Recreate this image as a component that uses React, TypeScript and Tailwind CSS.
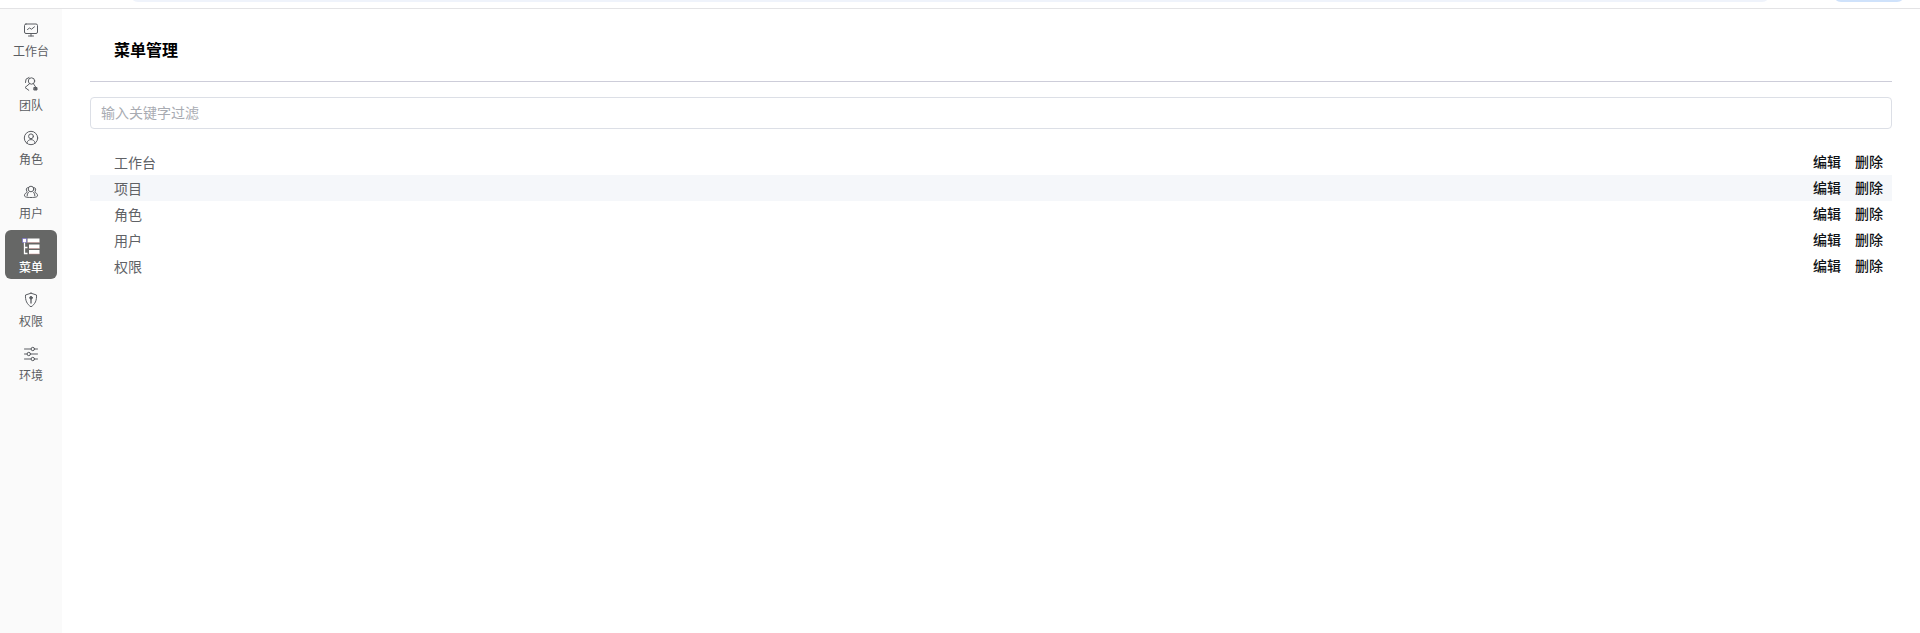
import React from "react";

const ic = { fill: "none", stroke: "currentColor", strokeWidth: 1, strokeLinecap: "round" as const, strokeLinejoin: "round" as const };

const Workbench = () => (
  <svg width="16" height="16" viewBox="0 0 16 16" {...ic}>
    <rect x="1.500" y="2" width="13" height="9.500" rx="1.500" />
    <path d="M4.500 7.500 6.500 6l2 1.200 3-2.400M8 11.500V14M5.500 14h5" />
  </svg>
);
const Team = () => (
  <svg width="16" height="16" viewBox="0 0 16 16" {...ic}>
    <circle cx="8.500" cy="5" r="3.200" />
    <path d="M6.500 7.800 2 11.500l3.800 2.800M10.500 7.800l2 3" />
    <path d="M6 1.500 3 3.200 2.500 6.500" />
    <rect x="11.200" y="11.500" width="2.800" height="2.500" fill="currentColor" />
  </svg>
);
const Role = () => (
  <svg width="16" height="16" viewBox="0 0 16 16" {...ic}>
    <circle cx="8" cy="8" r="6.700" />
    <circle cx="8" cy="6.300" r="2.400" />
    <path d="M3.800 13c.6-2.200 2.200-3.400 4.200-3.400s3.600 1.200 4.200 3.400" />
  </svg>
);
const User = () => (
  <svg width="16" height="16" viewBox="0 0 16 16" {...ic}>
    <circle cx="8" cy="5" r="2.800" />
    <path d="M5.300 3.500C3.800 3.500 3 4.600 3.400 6c.2 1 .8 1.500.8 2.300-1.300.6-3 1.600-2.700 3.600.2 1 2 1.600 6.500 1.600s6.300-.6 6.500-1.600c.3-2-1.400-3-2.700-3.600 0-.8.6-1.300.8-2.300.4-1.400-.4-2.500-1.900-2.500" />
    <path d="M5.500 8.500c-1 .8-1.500 2-1.300 3.300M10.500 8.500c1 .8 1.500 2 1.300 3.300" />
  </svg>
);
const MenuIcon = () => (
  <svg width="18" height="17" viewBox="0 0 18 17">
    <rect x="5.500" y="0.500" width="12" height="4" fill="#fff" />
    <rect x="0.500" y="0.500" width="4" height="4" fill="#fff" stroke="#6d62c8" strokeWidth="0.600" />
    <path d="M2.500 4.500v11h3M2.500 9.500h3" fill="none" stroke="#fff" strokeWidth="1.300" />
    <rect x="7" y="6.500" width="10.500" height="4" fill="#fff" />
    <rect x="7" y="12" width="10.500" height="4" fill="#fff" />
    <path d="M5.500 4.500h12M7 10.500h10.500M7 16h10.500" stroke="#c98f8f" strokeWidth="0.500" />
  </svg>
);
const Perm = () => (
  <svg width="16" height="16" viewBox="0 0 16 16" {...ic}>
    <path d="M8 1.200 13.500 3c.3 5.200-1.300 9.300-5.500 11.800C3.800 12.300 2.200 8.200 2.500 3L8 1.200Z" />
    <circle cx="8" cy="5.800" r="1.300" fill="currentColor" />
    <path d="M8 6.500v4.500" strokeWidth="1.300" />
  </svg>
);
const Env = () => (
  <svg width="16" height="16" viewBox="0 0 16 16" {...ic}>
    <path d="M1.500 3h6.500M11.500 3h3M1.500 8h2.500M7.500 8h7M1.500 13h6.500M11.500 13h3" />
    <circle cx="9.800" cy="3" r="1.700" />
    <circle cx="5.800" cy="8" r="1.700" />
    <circle cx="9.800" cy="13" r="1.700" />
  </svg>
);

const navItems: { label: string; Icon: () => React.ReactElement; active?: boolean }[] = [
  { label: "工作台", Icon: Workbench },
  { label: "团队", Icon: Team },
  { label: "角色", Icon: Role },
  { label: "用户", Icon: User },
  { label: "菜单", Icon: MenuIcon, active: true },
  { label: "权限", Icon: Perm },
  { label: "环境", Icon: Env },
];

const rows = ["工作台", "项目", "角色", "用户", "权限"];

export default function App() {
  return (
    <div className="w-[1920px] h-[633px] overflow-hidden bg-white flex flex-col font-['Inter','Noto_Sans_CJK_SC',sans-serif]">
      <header className="h-[9px] shrink-0 border-b border-[#e3e3e5] flex justify-between overflow-hidden">
        <div className="ml-[130px] w-[1640px] h-[16px] -mt-[14px] bg-[#eff3fb] rounded-[8px]" />
        <div className="mr-[15px] w-[72px] h-[16px] -mt-[14px] bg-[#cfe2fb] rounded-[8px]" />
      </header>
      <div className="flex flex-1 min-h-0">
        <nav className="w-[62px] shrink-0 bg-[#fafafa] px-[5px] pt-[5px] flex flex-col gap-[5px]">
          {navItems.map(({ label, Icon, active }) => (
            <div
              key={label}
              className={
                active
                  ? "h-[49px] rounded-[6px] bg-[#666766] text-white flex flex-col items-center pt-[7px]"
                  : "h-[49px] rounded-[6px] text-[#5a5d62] flex flex-col items-center pt-[7px]"
              }
            >
              <span className="h-[18px] flex items-center justify-center">
                <Icon />
              </span>
              <span className={active ? "mt-[3px] text-[12px] leading-[20px] font-medium" : "mt-[3px] text-[12px] leading-[20px]"}>{label}</span>
            </div>
          ))}
        </nav>
        <main className="flex-1 min-w-0 pl-[28px] pr-[28px]">
          <div className="h-[73px] border-b border-[#cdcdd9] pl-[24px] pt-[29px]">
            <h1 className="text-[16px] leading-[24px] font-bold text-black">菜单管理</h1>
          </div>
          <input
            readOnly
            placeholder="输入关键字过滤"
            className="mt-[15px] block w-full h-[32px] rounded-[4px] border border-[#dcdfe6] px-[10px] pb-[2px] text-[14px] outline-none placeholder:text-[#a8abb2]"
          />
          <ul className="mt-[20px]">
            {rows.map((r, i) => (
              <li
                key={r}
                className={
                  i === 1
                    ? "h-[26px] flex items-center justify-between pl-[24px] pr-[9px] bg-[#f5f7fa]"
                    : "h-[26px] flex items-center justify-between pl-[24px] pr-[9px]"
                }
              >
                <span className="text-[14px] text-[#606266]">{r}</span>
                <span className="mb-[2px] flex gap-[14px] text-[14px] font-medium text-[#0f1216]">
                  <span>编辑</span>
                  <span>删除</span>
                </span>
              </li>
            ))}
          </ul>
        </main>
      </div>
    </div>
  );
}
